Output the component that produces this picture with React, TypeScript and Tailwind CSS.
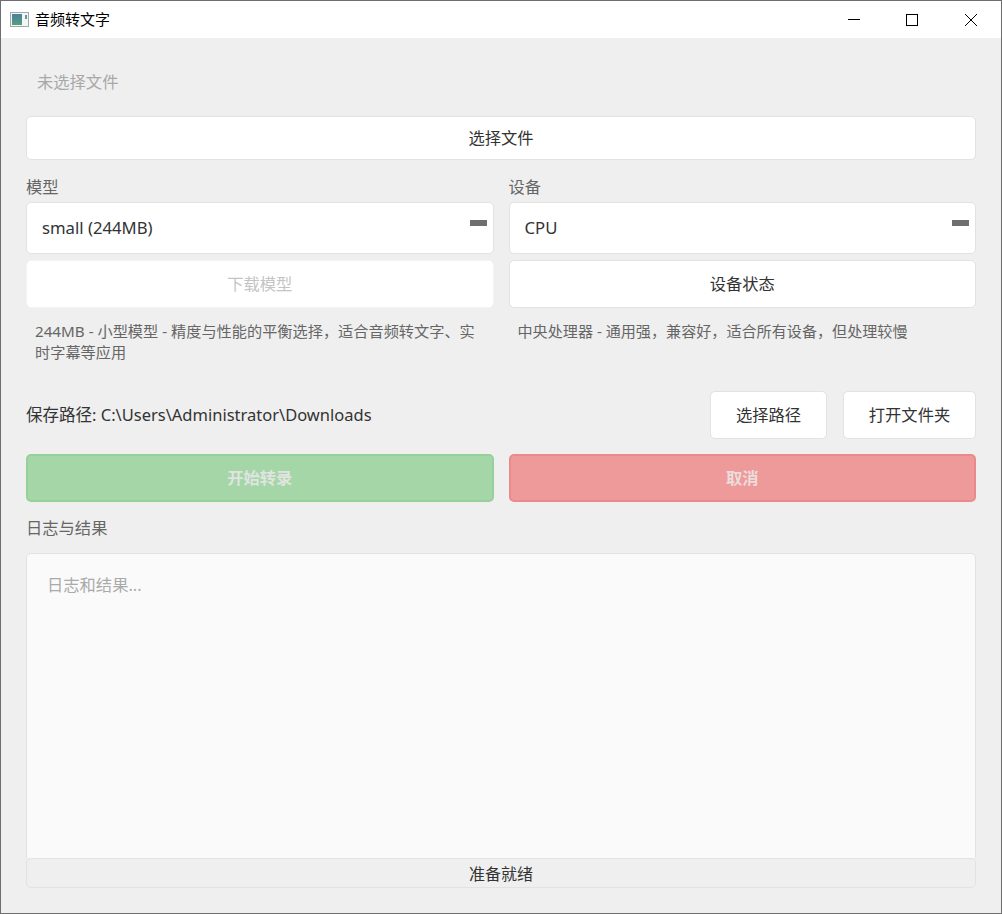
const font = "font-['Noto_Sans','Noto_Sans_CJK_SC',sans-serif]";

function Button({
  className,
  children,
}: {
  className: string;
  children: React.ReactNode;
}) {
  return (
    <div
      className={`flex items-center justify-center rounded-[5px] border text-[16.3px] leading-none ${className}`}
    >
      {children}
    </div>
  );
}

function Combo({ text }: { text: string }) {
  return (
    <div className="relative flex h-[52px] items-center rounded-[5px] border border-[#e2e2e2] bg-white pl-[15px] text-[16.7px] text-[#333333]">
      {text}
      {/* the arrow failed to load in the original, it draws as a grey bar */}
      <div className="absolute right-[6px] top-[17px] h-[6px] w-[17px] bg-[#6f6f6f]" />
    </div>
  );
}

function TitleBar() {
  return (
    <div className="flex h-[37px] shrink-0 items-center bg-white">
      <svg width="20" height="16" viewBox="0 0 20 16" className="ml-[9px]">
        <defs>
          <linearGradient id="icon-fill" x1="0" y1="0" x2="0" y2="1">
            <stop offset="0" stopColor="#4a7f9c" />
            <stop offset="1" stopColor="#55a07c" />
          </linearGradient>
        </defs>
        <rect x="0.5" y="0.5" width="18" height="14" fill="#f4f6f6" stroke="#a3a8aa" />
        <rect x="2" y="2" width="10" height="11" fill="url(#icon-fill)" />
        <rect x="15" y="3" width="2" height="4" fill="#5f9a94" />
      </svg>
      <span className="ml-[5px] text-[15px] leading-none text-black">音频转文字</span>
      <div className="ml-auto flex h-full items-center">
        <svg width="14" height="14" viewBox="0 0 14 14" className="mr-[44px]">
          <path d="M1 6.5H13" stroke="#000" fill="none" />
        </svg>
        <svg width="14" height="14" viewBox="0 0 14 14" className="mr-[45px]">
          <rect x="1.5" y="1.5" width="11" height="11" stroke="#000" fill="none" />
        </svg>
        <svg width="14" height="14" viewBox="0 0 14 14" className="mr-[23px]">
          <path d="M1 1L13 13M13 1L1 13" stroke="#000" fill="none" />
        </svg>
      </div>
    </div>
  );
}

export default function App() {
  return (
    <div
      className={`flex h-[914px] w-[1002px] flex-col overflow-hidden border border-[#6e6e6e] bg-[#efefef] ${font}`}
    >
      <TitleBar />
      <div className="flex min-h-0 flex-1 flex-col px-[25px]">
        <div className="mt-[32px] h-[24px] pl-[11px] text-[16.3px] leading-[24px] text-[#a8a8a8]">
          未选择文件
        </div>
        <Button className="mt-[22px] h-[44px] border-[#e2e2e2] bg-white text-[#333333]">
          选择文件
        </Button>

        <div className="mt-[15px] grid grid-cols-2 gap-x-[15px]">
          <div className="flex flex-col">
            <div className="h-[24px] text-[16.3px] leading-[24px] text-[#666666]">模型</div>
            <div className="mt-[3px]">
              <Combo text="small (244MB)" />
            </div>
            <Button className="mt-[6px] h-[48px] border-[#f3f3f3] bg-white text-[#c4c4c4]">
              下载模型
            </Button>
            <p className="mt-[13px] h-[42px] pl-[9px] pr-[10px] text-[15.2px] leading-[20.6px] text-[#666666]">
              244MB - 小型模型 - 精度与性能的平衡选择，适合音频转文字、实时字幕等应用
            </p>
          </div>
          <div className="flex flex-col">
            <div className="h-[24px] text-[16.3px] leading-[24px] text-[#666666]">设备</div>
            <div className="mt-[3px]">
              <Combo text="CPU" />
            </div>
            <Button className="mt-[6px] h-[48px] border-[#e2e2e2] bg-white text-[#333333]">
              设备状态
            </Button>
            <p className="mt-[13px] h-[42px] pl-[9px] pr-[10px] text-[15.1px] leading-[20.6px] text-[#666666]">
              中央处理器 - 通用强，兼容好，适合所有设备，但处理较慢
            </p>
          </div>
        </div>

        <div className="mt-[28px] flex h-[48px] items-center">
          <span className="text-[16.5px] text-[#333333]">
            保存路径: C:\Users\Administrator\Downloads
          </span>
          <Button className="ml-auto h-[48px] w-[117px] border-[#e2e2e2] bg-white text-[#333333]">
            选择路径
          </Button>
          <Button className="ml-[16px] h-[48px] w-[133px] border-[#e2e2e2] bg-white text-[#333333]">
            打开文件夹
          </Button>
        </div>

        <div className="mt-[15px] grid grid-cols-2 gap-x-[15px]">
          <Button className="h-[48px] border-2 border-[#96d19b] bg-[#a5d6a7] font-bold text-[#e0e4e0]">
            开始转录
          </Button>
          <Button className="h-[48px] border-2 border-[#e98a8d] bg-[#ef9a9a] font-bold text-[#ecdcdc]">
            取消
          </Button>
        </div>

        <div className="mt-[14px] h-[24px] text-[16.3px] leading-[24px] text-[#666666]">
          日志与结果
        </div>
        <div className="mt-[13px] h-[305px] rounded-t-[5px] border border-b-0 border-[#e2e2e2] bg-[#fafafa] pl-[20px] pt-[19px] text-[16.3px] leading-[24px] text-[#aaaaaa]">
          日志和结果...
        </div>
        <div className="flex h-[30px] items-center justify-center rounded-[5px] border border-[#e2e2e2] bg-[#efefef] pt-[2px] text-[16px] leading-none text-[#333333]">
          准备就绪
        </div>
      </div>
    </div>
  );
}
